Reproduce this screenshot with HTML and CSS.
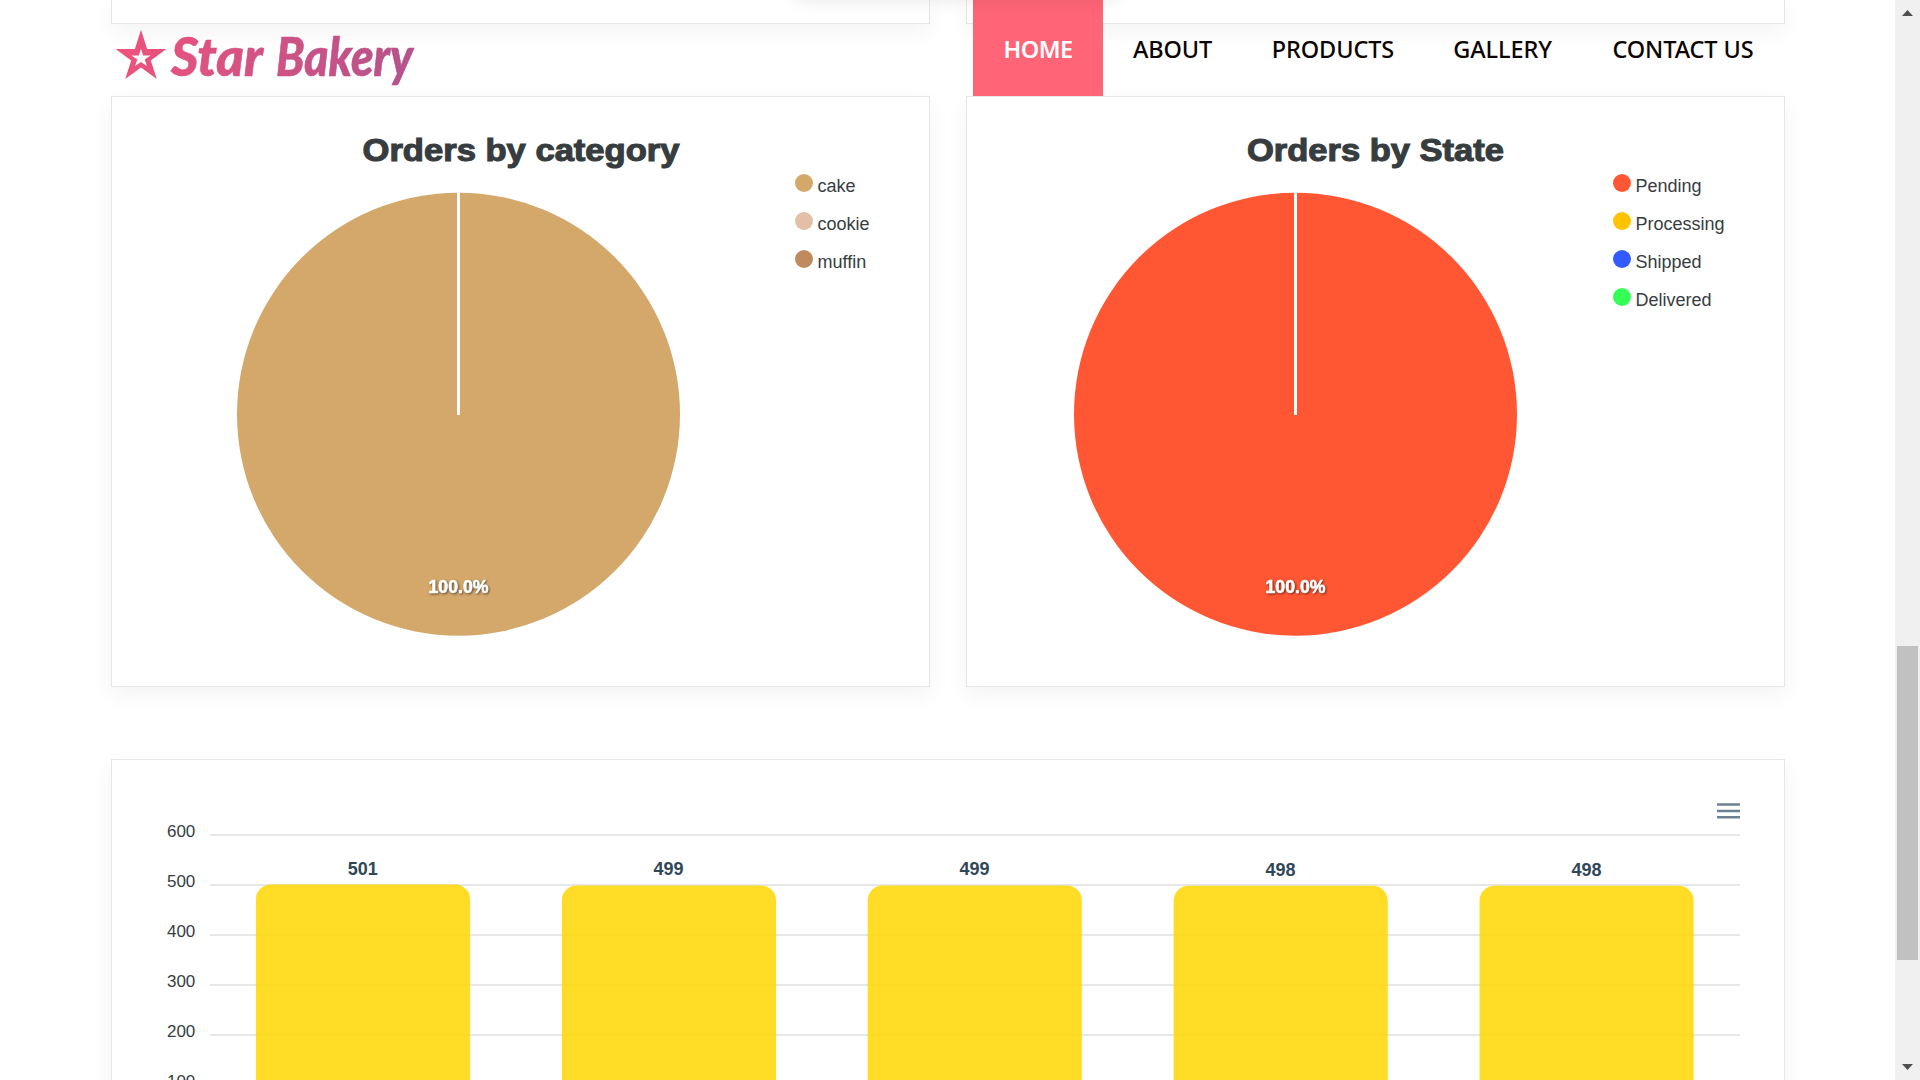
FILE: index.html
```
<!DOCTYPE html>
<html lang="en">
<head>
<meta charset="utf-8">
<title>Star Bakery</title>
<link rel="stylesheet" href="styles.css">
</head>
<body>
<main class="page">
  <header class="header">
    <a class="logo">
      <svg width="330" height="110" viewBox="111 0 330 110">
        <defs>
          <linearGradient id="brand" gradientUnits="userSpaceOnUse" x1="116" y1="40" x2="413" y2="80">
            <stop offset="0" stop-color="#ef527b"/><stop offset="1" stop-color="#b4528c"/>
          </linearGradient>
        </defs>
        <path fill="url(#brand)" fill-rule="evenodd" d="M141 29.8L147.1 49H166.4L150.8 60.5L156.8 79L141 67.6L125.2 79L131.2 60.5L115.6 49H134.900ZM141 49L138.800 55.400H131.500L137.300 59.500L135.100 66L141 62L146.900 66L144.700 59.500L150.500 55.400H143.200Z"/>
        <g class="logo-text" fill="url(#brand)" stroke="url(#brand)">
          <text x="171" y="76" textLength="92" lengthAdjust="spacingAndGlyphs">Star</text>
          <text x="276" y="76" textLength="137" lengthAdjust="spacingAndGlyphs">Bakery</text>
        </g>
      </svg>
    </a>
    <nav class="nav">
      <a class="nav-item home">HOME</a>
      <a class="nav-item about">ABOUT</a>
      <a class="nav-item products">PRODUCTS</a>
      <a class="nav-item gallery">GALLERY</a>
      <a class="nav-item contact">CONTACT US</a>
    </nav>
    <div class="dropdown-shadow"></div>
  </header>

  <div class="cards">
    <section class="card stub"></section>
    <section class="card stub"></section>

    <section class="card">
      <svg class="chart" width="817" height="589" viewBox="112 97 817 589">
        <text class="title" x="362.500" y="160.500" textLength="317" lengthAdjust="spacingAndGlyphs">Orders by category</text>
        <circle cx="458.500" cy="414.200" r="221.500" fill="#d4a76a"/>
        <path d="M458.500 192V415" stroke="#fff" stroke-width="3"/>
        <text class="percent" x="458.500" y="592.700" textLength="60" lengthAdjust="spacingAndGlyphs">100.0%</text>
        <g class="legend">
          <circle cx="804" cy="183" r="9" fill="#d4a76a"/><text x="817.500" y="191.500">cake</text>
          <circle cx="804" cy="221" r="9" fill="#e2bfa5"/><text x="817.500" y="229.500">cookie</text>
          <circle cx="804" cy="259" r="9" fill="#be8a5e"/><text x="817.500" y="267.500">muffin</text>
        </g>
      </svg>
    </section>

    <section class="card">
      <svg class="chart" width="817" height="589" viewBox="967 97 817 589">
        <text class="title" x="1247" y="160.500" textLength="257" lengthAdjust="spacingAndGlyphs">Orders by State</text>
        <circle cx="1295.500" cy="414.200" r="221.500" fill="#ff5733"/>
        <path d="M1295.500 192V415" stroke="#fff" stroke-width="3"/>
        <text class="percent" x="1295.500" y="592.700" textLength="60" lengthAdjust="spacingAndGlyphs">100.0%</text>
        <g class="legend">
          <circle cx="1622" cy="183" r="9" fill="#ff5733"/><text x="1635.500" y="191.500">Pending</text>
          <circle cx="1622" cy="221" r="9" fill="#ffc300"/><text x="1635.500" y="229.500">Processing</text>
          <circle cx="1622" cy="259" r="9" fill="#335bff"/><text x="1635.500" y="267.500">Shipped</text>
          <circle cx="1622" cy="297" r="9" fill="#33ff57"/><text x="1635.500" y="305.500">Delivered</text>
        </g>
      </svg>
    </section>

    <section class="card wide">
      <svg class="chart" width="1672" height="420" viewBox="112 760 1672 420">
        <path d="M1717 804.500H1740M1717 811H1740M1717 817.300H1740" stroke="#6e8192" stroke-width="2.400"/>
        <path d="M210 835H1740M210 885H1740M210 935H1740M210 985H1740M210 1035H1740M210 1085H1740" stroke="#e7e7e7" stroke-width="2"/>
        <g class="axis">
          <text x="195.300" y="836.700">600</text>
          <text x="195.300" y="886.700">500</text>
          <text x="195.300" y="936.700">400</text>
          <text x="195.300" y="986.700">300</text>
          <text x="195.300" y="1036.700">200</text>
          <text x="195.300" y="1086.700">100</text>
        </g>
        <g fill="#ffd700" fill-opacity=".85">
          <rect x="255.900" y="884.400" width="214.200" height="280" rx="15"/>
          <rect x="561.800" y="885.400" width="214.200" height="280" rx="15"/>
          <rect x="867.700" y="885.400" width="214.200" height="280" rx="15"/>
          <rect x="1173.600" y="885.800" width="214.200" height="280" rx="15"/>
          <rect x="1479.500" y="885.800" width="214.200" height="280" rx="15"/>
        </g>
        <g class="values">
          <text x="362.700" y="875">501</text>
          <text x="668.600" y="875.400">499</text>
          <text x="974.500" y="875.400">499</text>
          <text x="1280.500" y="875.500">498</text>
          <text x="1586.500" y="875.500">498</text>
        </g>
      </svg>
    </section>
  </div>
</main>
<aside class="scrollbar">
  <svg width="25" height="26" viewBox="0 0 25 26"><path d="M7 16L12.500 10L18 16Z" fill="#505050"/></svg>
  <div class="thumb"></div>
  <svg width="25" height="26" viewBox="0 0 25 26"><path d="M7 10H18L12.500 16Z" fill="#505050"/></svg>
</aside>
</body>
</html>
```
FILE: styles.css
```
* { box-sizing: border-box; }
body {
  margin: 0;
  height: 1080px;
  display: flex;
  overflow: hidden;
  background: #fff;
  font-family: "Liberation Sans", Arial, sans-serif;
}
.page {
  position: relative;
  flex: 1;
  height: 1080px;
  overflow: hidden;
}
/* fixed header, floating over the scrolled cards */
.header {
  position: absolute;
  inset: 0 0 auto 0;
  z-index: 2;
  height: 110px;
  padding: 0 110px 0 111px;
  display: flex;
  justify-content: space-between;
  align-items: flex-start;
}
.logo svg { display: block; overflow: visible; }
.logo-text {
  font: italic 900 53px Lato, sans-serif;
  stroke-width: .6;
}
.nav { display: flex; }
.nav-item {
  height: 96px;
  padding-top: 32px;
  font: 500 23.500px/35px "Noto Sans", "Open Sans", sans-serif;
  letter-spacing: -.1px;
  text-align: center;
  white-space: nowrap;
  color: #0c0404;
}
.home { width: 130px; background: #ff6577; color: #fff; font-weight: 600; letter-spacing: -.5px; }
.about { width: 139px; }
.products { width: 182px; }
.gallery { width: 157px; }
.contact { width: 204px; }
.dropdown-shadow {
  position: absolute;
  left: 796px;
  top: -20px;
  width: 320px;
  height: 16px;
  box-shadow: 0 0 20px rgba(0, 0, 0, .15);
}
.cards {
  display: grid;
  grid-template-columns: 819px 819px;
  grid-template-rows: 24px 591px 420px;
  column-gap: 36px;
  row-gap: 72px;
  padding-left: 111px;
}
.card {
  border: 1px solid #e6e6e6;
  background: #fff;
  box-shadow: 0 8px 22px rgba(0, 0, 0, .05);
}
.stub { border-top: 0; }
.wide { grid-column: 1 / 3; }
.chart { display: block; }
.title {
  font-size: 30.500px;
  font-weight: 900;
  fill: #373d3f;
  stroke: #373d3f;
  stroke-width: 1.100;
}
.percent {
  font-size: 17.500px;
  font-weight: 900;
  text-anchor: middle;
  fill: #fff;
  stroke: #fff;
  stroke-width: .6;
  filter: drop-shadow(1.500px 1.500px 1px rgba(0, 0, 0, .55));
}
.legend { font-size: 18px; fill: #373d3f; }
.axis { font-size: 17px; text-anchor: end; fill: #373d3f; }
.values { font-size: 18px; font-weight: 700; text-anchor: middle; fill: #304758; }
.scrollbar {
  width: 25px;
  height: 1080px;
  display: flex;
  flex-direction: column;
  justify-content: space-between;
  background: #f0f0f0;
}
.thumb {
  width: 21px;
  height: 314px;
  margin: 620px 2px auto;
  background: #c1c1c1;
}
```
